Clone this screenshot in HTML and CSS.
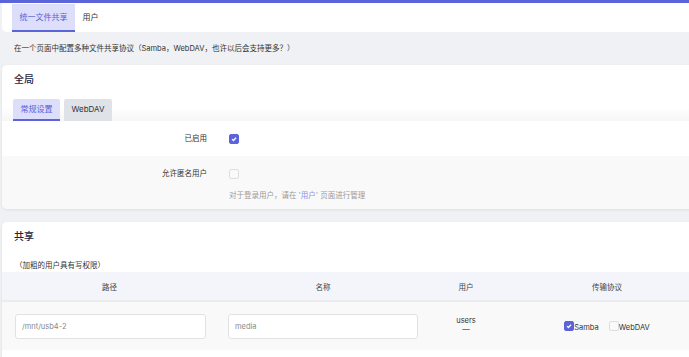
FILE: index.html
```html
<!DOCTYPE html>
<html lang="zh-CN">
<head>
    <meta charset="UTF-8">
    <meta name="viewport" content="width=device-width, initial-scale=1.0">
    <title>统一文件共享</title>
    <link rel="stylesheet" href="styles.css">
</head>
<body>
    <div class="topbar"></div>
    <div class="main">
        <!-- Вкладки страницы -->
        <div class="tabs">
            <a class="tab active">统一文件共享</a>
            <a class="tab">用户</a>
        </div>
        <p class="desc">在一个页面中配置多种文件共享协议（Samba，WebDAV，也许以后会支持更多？）</p>

        <!-- Общие настройки -->
        <div class="card">
            <h2>全局</h2>
            <div class="subtabs">
                <span class="subtab active">常规设置</span>
                <span class="subtab">WebDAV</span>
            </div>
            <div class="row">
                <div class="row-label">已启用</div>
                <div class="row-field">
                    <div class="field-line">
                        <span class="check on"><svg viewBox="0 0 10 10"><path d="M2.6 5.2 L4.3 6.9 L7.5 3.4"/></svg></span>
                    </div>
                </div>
            </div>
            <div class="row alt">
                <div class="row-label">允许匿名用户</div>
                <div class="row-field">
                    <div class="field-line"><span class="check"></span></div>
                    <div class="hint">对于登录用户，请在 '<a>用户</a>' 页面进行管理</div>
                </div>
            </div>
        </div>

        <!-- Общие папки -->
        <div class="card">
            <h2>共享</h2>
            <p class="note">（加粗的用户具有写权限）</p>
            <table class="shares">
                <colgroup>
                    <col class="c-path">
                    <col class="c-name">
                    <col class="c-users">
                    <col class="c-proto">
                </colgroup>
                <tr>
                    <th>路径</th>
                    <th>名称</th>
                    <th>用户</th>
                    <th>传输协议</th>
                </tr>
                <tr>
                    <td class="cell-path"><input class="text-input" type="text" value="/mnt/usb4-2"></td>
                    <td class="cell-name"><input class="text-input" type="text" value="media"></td>
                    <td class="cell-users">users<br>—</td>
                    <td class="cell-proto">
                        <span class="proto">
                            <span class="check on"><svg viewBox="0 0 10 10"><path d="M2.6 5.2 L4.3 6.9 L7.5 3.4"/></svg></span>Samba
                        </span>
                        <span class="proto">
                            <span class="check"></span>WebDAV
                        </span>
                    </td>
                </tr>
            </table>
            <button class="btn-add" aria-label="添加"></button>
        </div>
    </div>
</body>
</html>
```

FILE: styles.css
```css
body {
    margin: 0;
    font-family: 'Inter', 'Noto Sans CJK SC', sans-serif;
    background-color: #f0f1f4;
    color: #333;
    overflow: hidden;
}

.topbar {
    height: 3px;
    background: #5c64d9;
}

.main {
    margin: 0 -22px 0 2px;
}

/* Вкладки */
.tabs {
    display: flex;
    height: 29px;
    padding-left: 10px;
    background: #fff;
    border-radius: 0 0 0 5px;
}

.tab {
    margin-top: 1px;
    padding: 0 7.5px;
    font-size: 8px;
    line-height: 26px;
    border-bottom: 2px solid transparent;
    color: #333;
}

.tab.active {
    background: #dcdefa;
    color: #5a60d4;
    border-bottom-color: #5c64d9;
}

.desc {
    margin: 0;
    height: 33px;
    line-height: 33px;
    padding-left: 12px;
    font-size: 7.5px;
}

/* Карточки */
.card {
    background: #fff;
    border-radius: 5px;
    box-shadow: 0 1px 3px rgba(0, 0, 0, 0.08);
    margin-bottom: 13px;
}

.card h2 {
    margin: 0;
    padding: 7px 12px 0;
    font-size: 10px;
    line-height: 14px;
    font-weight: 500;
    color: #23233a;
}

.subtabs {
    display: flex;
    gap: 4px;
    padding: 13px 0 0 11px;
    background: linear-gradient(#fff 60%, #f6f6f7);
}

.subtab {
    padding: 0 7.5px;
    font-size: 8px;
    line-height: 20px;
    background: #dfe2e7;
    border-radius: 2px 2px 0 0;
    border-bottom: 2px solid transparent;
}

.subtab.active {
    background: #dcdefa;
    color: #5a60d4;
    border-bottom-color: #5c64d9;
}

.row {
    display: flex;
    padding: 10px 0;
    background: #fff;
}

.row.alt {
    background: #f9f9f9;
    padding-bottom: 6px;
    border-radius: 0 0 0 5px;
}

.row-label {
    width: 205px;
    text-align: right;
    font-size: 7.5px;
    line-height: 15px;
}

.row-field {
    margin-left: 22px;
}

.field-line {
    display: flex;
    align-items: center;
    height: 15px;
}

.hint {
    margin-top: 7px;
    font-size: 7.5px;
    line-height: 15px;
    color: #999;
}

.hint a {
    color: #8c92e6;
}

/* Чекбоксы */
.check {
    display: inline-block;
    box-sizing: border-box;
    width: 10px;
    height: 10px;
    border: 1px solid #dedede;
    border-radius: 2px;
    background: #fafafa;
}

.check.on {
    border-color: #5c64d9;
    background: #5c64d9;
}

.check svg {
    display: block;
    width: 8px;
    height: 8px;
    fill: none;
    stroke: #fff;
    stroke-width: 1.6;
}

/* Таблица */
.note {
    margin: 17px 0 0;
    padding-left: 13px;
    font-size: 7.5px;
    line-height: 12px;
}

.shares {
    width: 709px;
    border-collapse: collapse;
    table-layout: fixed;
}

.c-path { width: 215px; }
.c-name { width: 212px; }
.c-users { width: 74px; }
.c-proto { width: 208px; }

.shares th {
    height: 28px;
    padding: 0;
    background: #f4f5fa;
    border-bottom: 2px solid #ebecef;
    font-size: 7.5px;
    font-weight: normal;
    color: #444;
}

.shares td {
    height: 44px;
    padding: 0;
    background: #f9f9f9;
    font-size: 7.5px;
}

.shares td.cell-path {
    padding: 0 11px 0 13px;
}

.shares td.cell-name {
    padding: 0 11px;
}

.text-input {
    display: block;
    box-sizing: border-box;
    width: 100%;
    height: 25px;
    padding: 0 6px;
    border: 1px solid #e2e2e4;
    border-radius: 3px;
    background: #fff;
    font-family: 'Inter', 'Noto Sans CJK SC', sans-serif;
    font-size: 7.5px;
    color: #888;
}

.cell-users {
    text-align: center;
    line-height: 9.5px;
    padding-bottom: 2px !important;
}

.cell-proto {
    text-align: center;
    padding-top: 4px !important;
}

.proto {
    display: inline-flex;
    align-items: center;
    margin: 0 4px;
    line-height: 12px;
}

.proto .check {
    margin-bottom: 4px;
}

.btn-add {
    display: block;
    margin: 7px 0 0 12px;
    width: 31px;
    height: 22px;
    border: none;
    border-radius: 3px;
    background: #5c64d9;
}
```
